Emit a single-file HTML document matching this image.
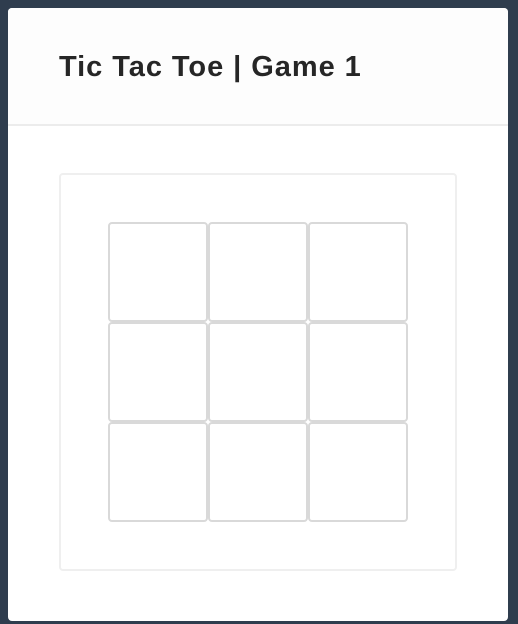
<!DOCTYPE html>
<html><head><style>
html,body{margin:0;padding:0;width:518px;height:624px;background:#2f3d4e;overflow:hidden}
.card{position:absolute;left:8px;top:8px;width:500px;height:613px;background:#fff;border-radius:4px;overflow:hidden}
.hdr{background:#fdfdfd;border-bottom:2px solid #ececec;box-sizing:border-box;height:118px}
.hdr h1{margin:0;position:absolute;left:51px;top:43px;font:bold 29px "Liberation Sans",sans-serif;letter-spacing:0.95px;color:#262626}
.box{position:absolute;left:51px;top:165px;width:398px;height:398px;border:2px solid #efefef;border-radius:4px;box-sizing:border-box}
.c{position:absolute;width:100px;height:100px;border:2px solid #d9d9d9;border-radius:4px;box-sizing:border-box;background:#fff}
</style></head><body>
<div class="card"><div class="hdr"><h1>Tic Tac Toe | Game 1</h1></div>
<div class="box"></div>
<div class="c" style="left:100px;top:214px"></div><div class="c" style="left:200px;top:214px"></div><div class="c" style="left:300px;top:214px"></div>
<div class="c" style="left:100px;top:314px"></div><div class="c" style="left:200px;top:314px"></div><div class="c" style="left:300px;top:314px"></div>
<div class="c" style="left:100px;top:414px"></div><div class="c" style="left:200px;top:414px"></div><div class="c" style="left:300px;top:414px"></div>
</div>
</body></html>
